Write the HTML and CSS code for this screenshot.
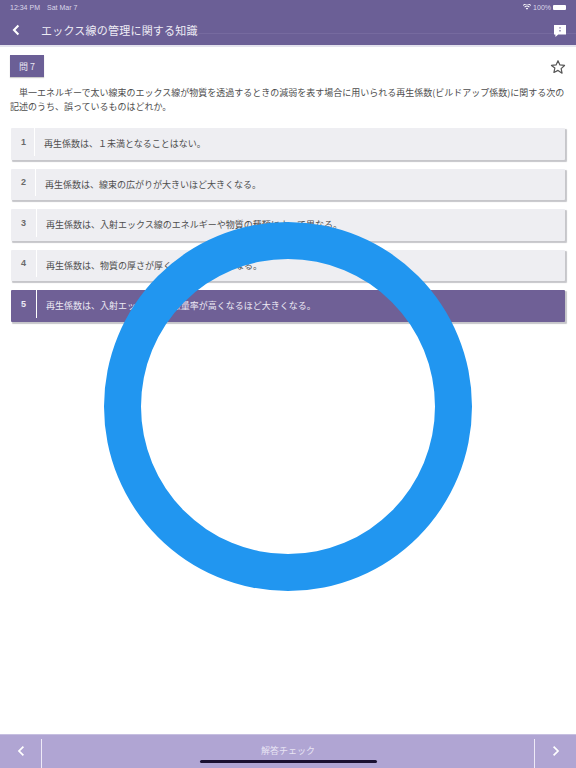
FILE: index.html
```html
<!DOCTYPE html>
<html lang="ja">
<head>
<meta charset="utf-8">
<title>エックス線の管理に関する知識</title>
<link rel="stylesheet" href="styles.css">
</head>
<body>
<div class="page">
  <header class="header">
    <div class="status">
      <span class="time">12:34 PM</span>
      <span class="date">Sat Mar 7</span>
      <span class="status-right">
        <svg class="wifi" viewBox="0 0 12 9" width="8" height="6"><path d="M6 8.6 4.2 6.5a2.6 2.6 0 0 1 3.6 0zM2.9 5.2a4.4 4.4 0 0 1 6.2 0l1-1.2a6 6 0 0 0-8.2 0zM.6 2.8a7.6 7.6 0 0 1 10.8 0l1-1.1a9.2 9.2 0 0 0-12.8 0z" fill="#fff"/></svg>
        <span class="pct">100%</span>
        <span class="battery"></span>
      </span>
    </div>
    <div class="titlebar">
      <svg class="back" viewBox="0 0 10 14" width="8" height="12"><path d="M8 1.5 2.5 7 8 12.5" fill="none" stroke="#fff" stroke-width="2.6"/></svg>
      <h1 class="title">エックス線の管理に関する知識</h1>
      <span class="title-rule"></span>
      <svg class="comment" viewBox="0 0 12 12" width="12" height="12"><path d="M0 0h12v9.4H4.2L1.4 12V9.4H0z" fill="#fff"/><path d="M6 2.2v1.4M6 5v1.4" stroke="#6b5f96" stroke-width="1.2"/></svg>
    </div>
  </header>

  <main class="main">
    <div class="qhead">
      <div class="qbadge">問 7</div>
      <svg class="star" viewBox="0 0 24 24" width="16" height="16"><path d="M12 2.6l2.9 6.3 6.9.8-5.1 4.7 1.4 6.8L12 17.1l-6.1 3.1 1.4-6.8L2.200 9.700l6.900-.8z" fill="none" stroke="#555" stroke-width="1.800" stroke-linejoin="round"/></svg>
    </div>
    <p class="question">単一エネルギーで太い線束のエックス線が物質を透過するときの減弱を表す場合に用いられる再生係数(ビルドアップ係数)に関する次の記述のうち、誤っているものはどれか。</p>
    <ol class="options">
      <li class="option"><span class="num n-a">1</span><span class="text">再生係数は、１未満となることはない。</span></li>
      <li class="option"><span class="num n-b">2</span><span class="text">再生係数は、線束の広がりが大きいほど大きくなる。</span></li>
      <li class="option"><span class="num n-c">3</span><span class="text">再生係数は、入射エックス線のエネルギーや物質の種類によって異なる。</span></li>
      <li class="option"><span class="num n-c">4</span><span class="text">再生係数は、物質の厚さが厚くなるほど大きくなる。</span></li>
      <li class="option selected"><span class="num n-c">5</span><span class="text">再生係数は、入射エックス線の線量率が高くなるほど大きくなる。</span></li>
    </ol>
  </main>

  <footer class="footer">
    <div class="nav nav-prev"><svg viewBox="0 0 10 14" width="8" height="12"><path d="M8 1.500 2.500 7 8 12.500" fill="none" stroke="#fff" stroke-width="2.200"/></svg></div>
    <div class="check">解答チェック</div>
    <div class="nav nav-next"><svg viewBox="0 0 10 14" width="8" height="12"><path d="M2 1.500 7.500 7 2 12.500" fill="none" stroke="#fff" stroke-width="2.200"/></svg></div>
  </footer>

  <div class="ring"></div>
  <div class="home"></div>
</div>
</body>
</html>
```
FILE: styles.css
```css
* { box-sizing: border-box; }
html, body { margin: 0; padding: 0; background: #fff; }
.page {
  position: relative;
  width: 576px;
  height: 768px;
  overflow: hidden;
  display: flex;
  flex-direction: column;
  font-family: "Noto Sans CJK JP", "Liberation Sans", sans-serif;
  color: #4a4a4a;
}
.header {
  background: #6b5f96;
  height: 47px;
  border-bottom: 2px solid #e4e3ee;
  color: #fff;
  flex: none;
}
.status {
  display: flex;
  align-items: center;
  height: 14px;
  padding: 0 10px 0 10px;
  font-family: "Liberation Sans", sans-serif;
  font-size: 7px;
  color: #dcd8ea;
}
.date { margin-left: 7px; }
.status-right { margin-left: auto; display: flex; align-items: center; gap: 2px; }
.battery { width: 13px; height: 5px; background: #fff; border-radius: 1px; }
.titlebar {
  display: flex;
  align-items: center;
  height: 31px;
  padding: 0 0 0 12px;
}
.title {
  margin: 0 0 0 21px;
  font-size: 11px;
  font-weight: 400;
  letter-spacing: 0.22px;
  color: #eeecf5;
  white-space: nowrap;
}
.title-rule {
  flex: 1;
  height: 1px;
  margin: 8px 0 0 0;
  background: #766a9f;
  align-self: center;
}
.comment { margin: 3px 10px 0 -22px; position: relative; }
.main {
  flex: 1;
  padding: 8px 11px 0 11px;
}
.qhead {
  display: flex;
  justify-content: space-between;
  align-items: center;
  margin-left: -1px;
}
.qbadge {
  width: 34px;
  height: 22px;
  background: #6b5f96;
  color: #e8e6f2;
  font-size: 9px;
  display: flex;
  align-items: center;
  justify-content: center;
  box-shadow: 0 1px 1px rgba(0, 0, 0, .2);
}
.star { margin-top: 2px; margin-right: -1px; }
.question {
  margin: 9px 0 0 -1px;
  font-size: 9px;
  line-height: 14px;
  text-indent: 9px;
  color: #4d4d4d;
}
.options {
  list-style: none;
  margin: 14px 0 0 0;
  padding: 0;
  display: flex;
  flex-direction: column;
  gap: 9px;
}
.option {
  display: flex;
  align-items: stretch;
  height: 31.5px;
  background: #eeeef2;
  border-radius: 1px;
  box-shadow: 1.5px 1.5px 1px #c6c6ca;
  font-size: 9px;
}
.num {
  display: flex;
  align-items: center;
  padding-left: 10px;
  flex: none;
  font-family: "Liberation Sans", sans-serif;
  font-size: 9px;
  font-weight: 700;
  color: #6a6a6a;
  border-right: 1px solid #fff;
  margin-bottom: 4px;
}
.n-a { width: 24px; }
.n-b { width: 25px; }
.n-c { width: 26px; }
.text {
  display: flex;
  align-items: center;
  padding-left: 9px;
  white-space: nowrap;
  color: #4d4d4d;
}
.selected { background: #6f6096; }
.selected .num, .selected .text { color: #ece9f4; }
.footer {
  flex: none;
  height: 34px;
  display: flex;
  background: #b0a5d3;
  border-top: 1px solid #c6bfe0;
  color: #e8e4f4;
}
.nav {
  flex: none;
  width: 42px;
  display: flex;
  align-items: center;
  justify-content: center;
  margin-top: 4px;
  padding-bottom: 6px;
}
.nav-prev { border-right: 1px solid #eeeaf7; }
.nav-next { border-left: 1px solid #eeeaf7; }
.check {
  flex: 1;
  text-align: center;
  font-size: 9px;
  line-height: 31px;
}
.ring {
  position: absolute;
  left: 104px;
  top: 222px;
  width: 368px;
  height: 369px;
  border: 37px solid #2196f0;
  border-radius: 50%;
}
.home {
  position: absolute;
  left: 200px;
  top: 760px;
  width: 177px;
  height: 3px;
  border-radius: 2px;
  background: #1a1030;
}
```
